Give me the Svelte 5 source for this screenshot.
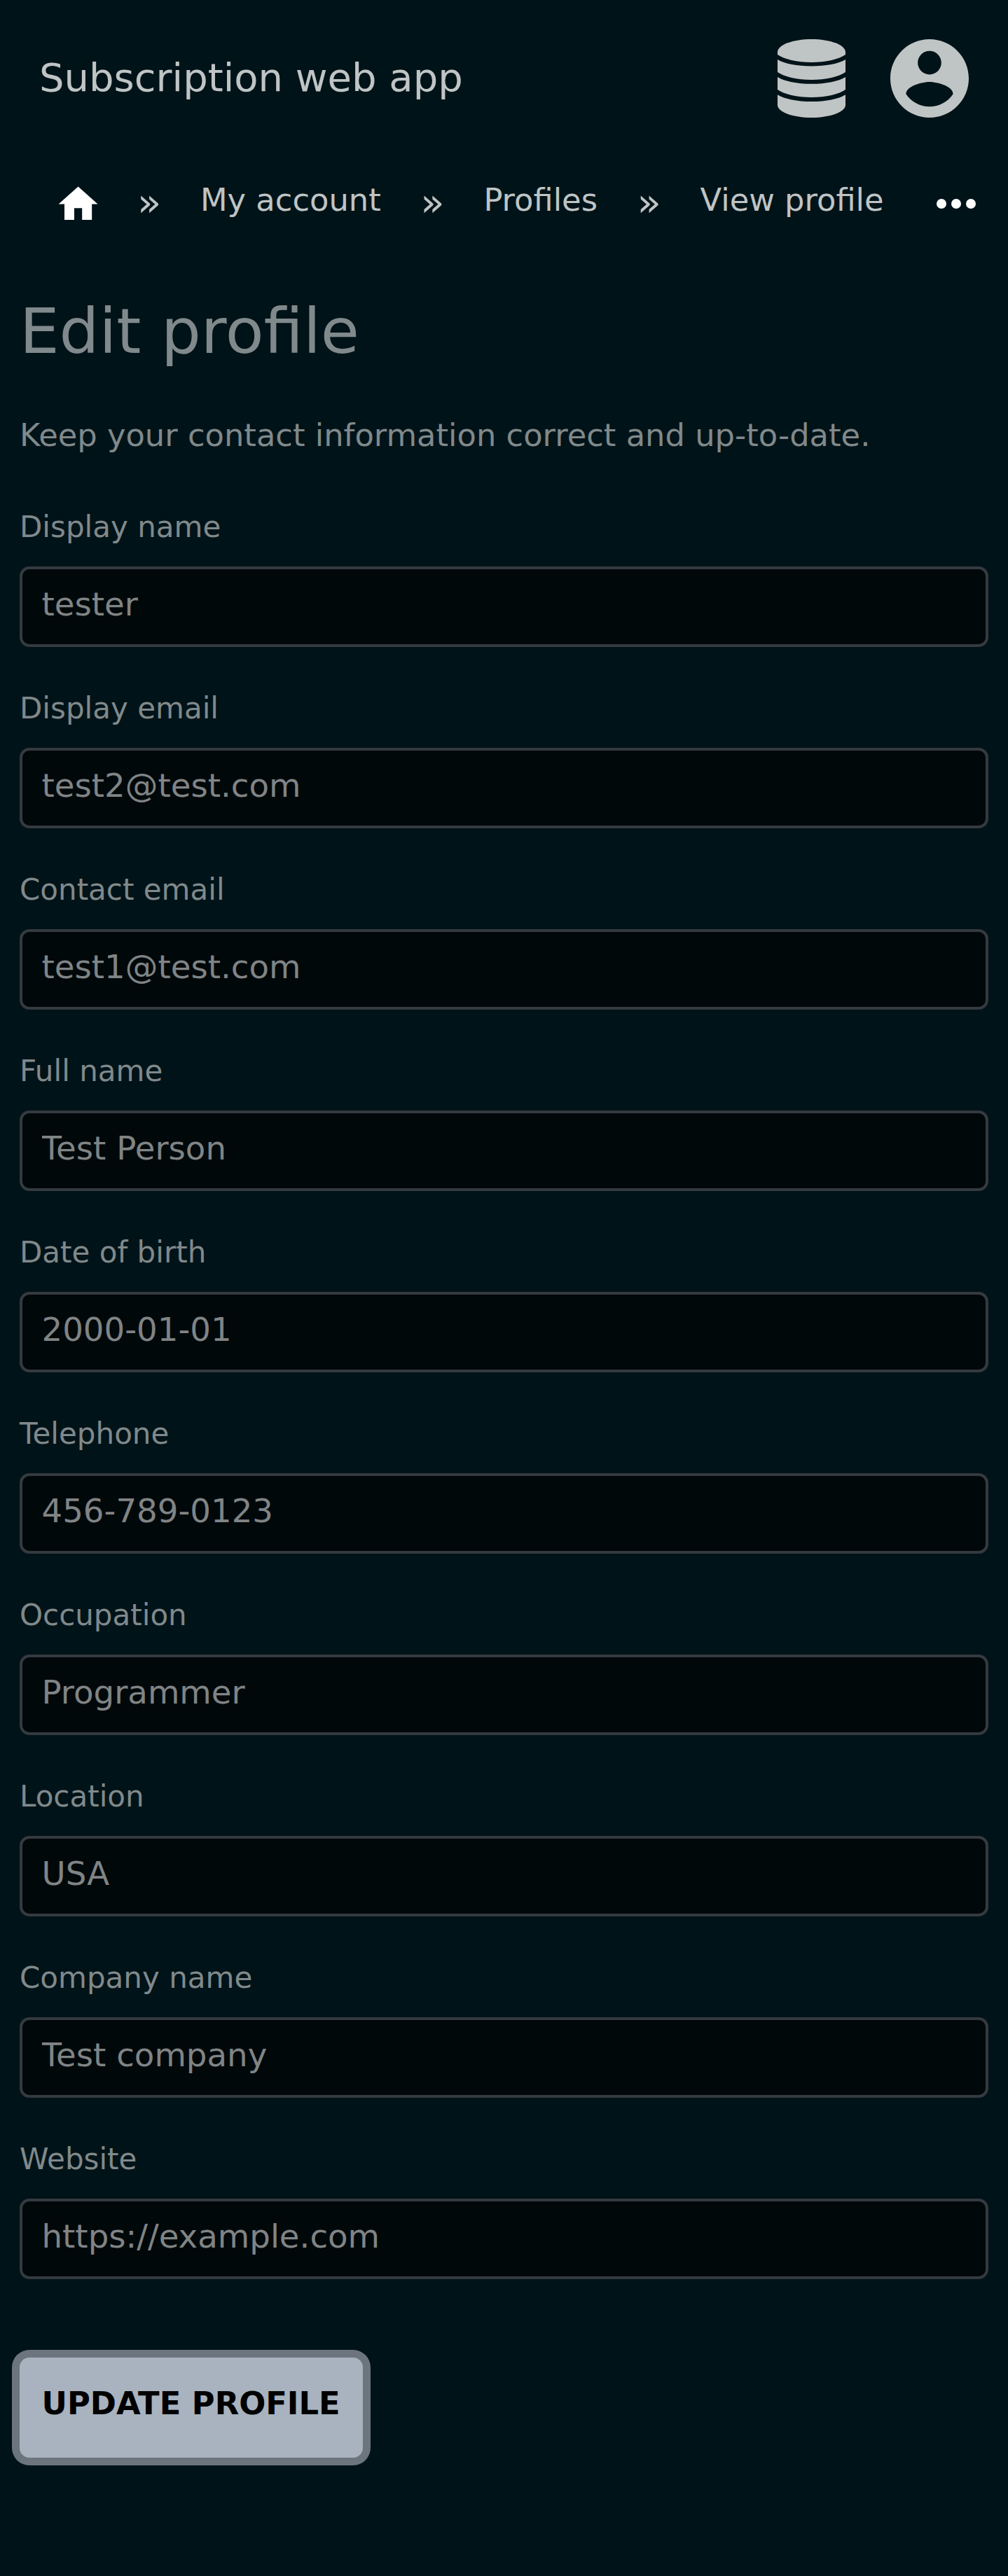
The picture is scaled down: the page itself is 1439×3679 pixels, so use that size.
<script>
  const crumbs = ['My account', 'Profiles', 'View profile'];
  const fields = $state([
    { id: 'display-name', label: 'Display name', value: 'tester' },
    { id: 'display-email', label: 'Display email', value: 'test2@test.com' },
    { id: 'contact-email', label: 'Contact email', value: 'test1@test.com' },
    { id: 'full-name', label: 'Full name', value: 'Test Person' },
    { id: 'birth-date', label: 'Date of birth', value: '2000-01-01' },
    { id: 'telephone', label: 'Telephone', value: '456-789-0123' },
    { id: 'occupation', label: 'Occupation', value: 'Programmer' },
    { id: 'location', label: 'Location', value: 'USA' },
    { id: 'company', label: 'Company name', value: 'Test company' },
    { id: 'website', label: 'Website', value: 'https://example.com' }
  ]);
</script>

<div class="page">
  <header>
    <span class="brand">Subscription web app</span>
    <svg class="database" viewBox="0 0 97 112" aria-hidden="true">
      <path d="M0 18.5C0 8 22 0 48.5 0S97 8 97 18.5V22C88 28.5 69 33 48.5 33S9 28.5 0 22Z" />
      <path d="M0 29C10 35 28 38.5 48.5 38.5S87 35 97 29V47C88 53.5 69 58 48.5 58S9 53.5 0 47Z" />
      <path d="M0 54C10 60.2 28 63.8 48.5 63.8S87 60.2 97 54V72C88 78.5 69 83 48.5 83S9 78.5 0 72Z" />
      <path d="M0 79.2C10 85.4 28 89 48.5 89S87 85.4 97 79.2V94C97 104 75 112 48.5 112S0 104 0 94Z" />
    </svg>
    <svg class="account" viewBox="2 2 20 20" aria-hidden="true">
      <path d="M12 2C6.48 2 2 6.48 2 12s4.48 10 10 10 10-4.48 10-10S17.52 2 12 2zm0 3c1.66 0 3 1.34 3 3s-1.34 3-3 3-3-1.34-3-3 1.34-3 3-3zm0 14.2c-2.5 0-4.71-1.28-6-3.22.03-1.99 4-3.08 6-3.08 1.99 0 5.97 1.09 6 3.08-1.29 1.94-3.5 3.22-6 3.22z" />
    </svg>
  </header>

  <nav>
    <svg class="home" viewBox="0 0 24 24" aria-hidden="true">
      <path d="M10 20v-6h4v6h5v-8h3L12 3 2 12h3v8z" />
    </svg>
    {#each crumbs as crumb}
      <span class="sep">»</span>
      <span class="crumb">{crumb}</span>
    {/each}
    <svg class="more" viewBox="0 0 24 24" aria-hidden="true">
      <circle cx="6" cy="12" r="2" /><circle cx="12" cy="12" r="2" /><circle cx="18" cy="12" r="2" />
    </svg>
  </nav>

  <main>
    <h1>Edit profile</h1>
    <p>Keep your contact information correct and up-to-date.</p>
    <form>
      {#each fields as field (field.id)}
        <div class="field">
          <label for={field.id}>{field.label}</label>
          <input id={field.id} type="text" bind:value={field.value} />
        </div>
      {/each}
      <button type="button">UPDATE PROFILE</button>
    </form>
  </main>
</div>

<style>
  :global(body) {
    margin: 0;
    background: #001318;
  }
  .page {
    box-sizing: border-box;
    height: 3679px;
    overflow: hidden;
    background: #001318;
    color: #80898b;
    font-family: 'DejaVu Sans', sans-serif;
  }
  header {
    display: flex;
    align-items: center;
    height: 112px;
    padding: 56px 56px 0;
    color: #bfc4c5;
  }
  .brand {
    flex: 1;
    font-size: 56px;
    line-height: 110px;
    padding-bottom: 2px;
  }
  svg {
    display: block;
    flex: none;
    fill: currentColor;
  }
  .database {
    width: 97px;
    height: 112px;
    margin-right: 64px;
  }
  .account {
    width: 112px;
    height: 112px;
  }
  nav {
    display: flex;
    align-items: center;
    height: 84px;
    margin-top: 80.5px;
    padding-left: 78.4px;
    color: #bfc4c5;
    font-size: 44.8px;
    line-height: 52px;
    white-space: nowrap;
  }
  .home {
    width: 67.2px;
    height: 67.2px;
    margin-top: 3px;
    color: #fff;
  }
  .sep {
    margin-left: 56.5px;
    padding-bottom: 4px;
    font-size: 56px;
  }
  .home + .sep {
    margin-left: 50.3px;
  }
  .crumb {
    margin-left: 55.8px;
    padding-bottom: 9px;
  }
  .more {
    width: 84px;
    height: 84px;
    margin-left: 61px;
    color: #fff;
  }
  main {
    padding: 0 28px;
  }
  h1 {
    margin: 88px 0 0;
    font-size: 89.6px;
    font-weight: 400;
    line-height: 104px;
  }
  p {
    margin: 71px 0 0;
    font-size: 44.8px;
    line-height: 52px;
  }
  form {
    margin-top: 80px;
  }
  .field {
    height: 259.05px;
  }
  label {
    display: block;
    margin-bottom: 31px;
    font-size: 42px;
    line-height: 50px;
  }
  input {
    display: block;
    box-sizing: border-box;
    width: 100%;
    height: 115.5px;
    padding: 0 27.5px 7px;
    border: 4px solid #343a40;
    border-radius: 14px;
    outline: none;
    background: #00080a;
    color: #808485;
    font: 46.67px 'DejaVu Sans', sans-serif;
  }
  button {
    display: block;
    height: 143px;
    margin: 49px 0 0;
    padding: 0 32.5px 11px 31.5px;
    border: 0;
    border-radius: 14px;
    box-shadow: 0 0 0 11px #6c757d;
    background: #a8b3bf;
    color: #000;
    font: bold 44.8px 'DejaVu Sans', sans-serif;
  }
</style>
